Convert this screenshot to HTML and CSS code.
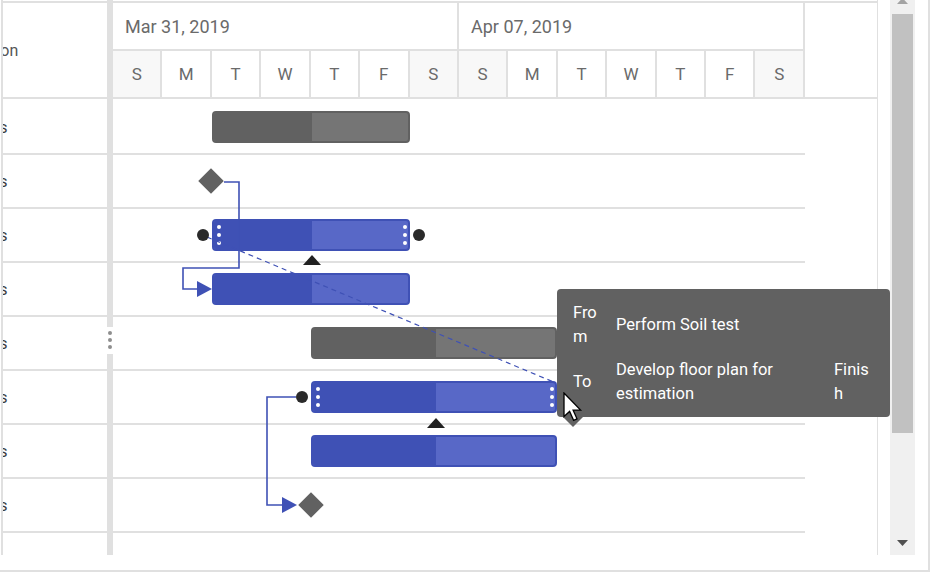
FILE: index.html
```html
<!DOCTYPE html>
<html>
<head>
<meta charset="utf-8">
<title>Gantt</title>
<link rel="stylesheet" href="styles.css">
</head>
<body>
<div class="gantt">
  <div class="main">
    <div class="grid-pane">
      <div class="grid-header"><span class="grid-text grid-title">Duration</span></div>
      <div class="grid-body">
        <div class="grid-row"><span class="grid-text">4 days</span></div>
        <div class="grid-row"><span class="grid-text">0 days</span></div>
        <div class="grid-row"><span class="grid-text">4 days</span></div>
        <div class="grid-row"><span class="grid-text">4 days</span></div>
        <div class="grid-row"><span class="grid-text">5 days</span></div>
        <div class="grid-row"><span class="grid-text">5 days</span></div>
        <div class="grid-row"><span class="grid-text">5 days</span></div>
        <div class="grid-row"><span class="grid-text">0 days</span></div>
        <div class="grid-row"></div>
      </div>
    </div>

    <div class="splitter">
      <div class="splitter-bar splitter-top"></div>
      <div class="splitter-grip"><i></i><i></i><i></i></div>
      <div class="splitter-bar splitter-bottom"></div>
    </div>

    <div class="chart-pane">
      <div class="chart-header">
        <div class="timeline">
          <div class="weeks">
            <div class="week">Mar 31, 2019</div>
            <div class="week">Apr 07, 2019</div>
          </div>
          <div class="days">
            <div class="day weekend">S</div>
            <div class="day">M</div>
            <div class="day">T</div>
            <div class="day">W</div>
            <div class="day">T</div>
            <div class="day">F</div>
            <div class="day weekend">S</div>
            <div class="day weekend">S</div>
            <div class="day">M</div>
            <div class="day">T</div>
            <div class="day">W</div>
            <div class="day">T</div>
            <div class="day">F</div>
            <div class="day weekend">S</div>
          </div>
        </div>
        <div class="header-filler"></div>
      </div>

      <div class="chart-body">
        <div class="row">
          <div class="bar bar-grey" style="margin-left:99px;width:198px"><div class="progress" style="width:98px"></div></div>
        </div>
        <div class="row">
          <div class="milestone" style="margin-left:89px"></div>
        </div>
        <div class="row">
          <div class="bar bar-blue" style="margin-left:99px;width:198px">
            <div class="progress" style="width:98px"></div>
            <div class="grip grip-left"><i></i><i></i><i></i></div>
            <div class="grip grip-right"><i></i><i></i><i></i></div>
          </div>
        </div>
        <div class="row">
          <div class="bar bar-blue" style="margin-left:99px;width:198px"><div class="progress" style="width:98px"></div></div>
        </div>
        <div class="row">
          <div class="bar bar-grey" style="margin-left:198px;width:246px"><div class="progress" style="width:123px"></div></div>
        </div>
        <div class="row">
          <div class="bar bar-blue" style="margin-left:198px;width:246px">
            <div class="progress" style="width:123px"></div>
            <div class="grip grip-left"><i></i><i></i><i></i></div>
            <div class="grip grip-right"><i></i><i></i><i></i></div>
          </div>
        </div>
        <div class="row">
          <div class="bar bar-blue" style="margin-left:198px;width:246px"><div class="progress" style="width:123px"></div></div>
        </div>
        <div class="row">
          <div class="milestone" style="margin-left:189px"></div>
        </div>
        <div class="row"></div>
      </div>

      <svg class="overlay" width="764" height="456" viewBox="113 99 764 456">
        <path class="connector" d="M224 182 H239 V268 H183 V289 H199"/>
        <polygon class="arrow" points="197,281 197,297 212,289"/>
        <path class="connector" d="M296 397 H267 V505 H284"/>
        <polygon class="arrow" points="282,497 282,513 297,505"/>
        <line class="dashed" x1="207" y1="237" x2="556" y2="383"/>
        <circle class="point" cx="203" cy="235" r="6"/>
        <circle class="point" cx="419" cy="235" r="6"/>
        <circle class="point" cx="302" cy="397" r="6"/>
        <polygon class="handle" points="303,265 321,265 312,255"/>
        <polygon class="handle" points="427,428 445,428 436,418"/>
        <polygon class="drag-mark" points="573,403 585,415 573,427 561,415"/>
      </svg>
    </div>

    <div class="vscroll">
      <div class="scroll-up"><svg width="25" height="14" viewBox="0 0 25 14"><polygon points="7,4 18,4 12.5,-2" class="arrow-up"/></svg></div>
      <div class="scroll-thumb"></div>
      <div class="scroll-space"></div>
      <div class="scroll-down"><svg width="25" height="20" viewBox="0 0 25 20"><polygon points="7,5 18,5 12.5,11" class="arrow-down"/></svg></div>
    </div>
  </div>

  <div class="tooltip">
    <div class="tt-label">From</div>
    <div class="tt-value">Perform Soil test</div>
    <div class="tt-extra"></div>
    <div class="tt-label">To</div>
    <div class="tt-value">Develop floor plan for estimation</div>
    <div class="tt-extra">Finish</div>
  </div>

  <svg class="cursor" width="20" height="30" viewBox="0 0 20 30">
    <path d="M1 1 L1 24.5 L6.6 19.4 L10.6 28.3 L14 26.8 L10.1 18.1 L17.6 18.1 Z"/>
  </svg>
</div>
</body>
</html>
```

FILE: styles.css
```css
* {
  box-sizing: border-box;
}

html,
body {
  margin: 0;
  background: #ffffff;
  font-family: Roboto, "Liberation Sans", Arial, sans-serif;
}

.gantt {
  position: relative;
  width: 930px;
  height: 572px;
  border-right: 2px solid #e0e0e0;
  border-bottom: 2px solid #e0e0e0;
}

.main {
  display: flex;
  height: 555px;
}

/* ---------- grid pane ---------- */
.grid-pane {
  flex: none;
  width: 106px;
  margin-left: 1px;
  border-left: 2px solid #e0e0e0;
  padding-top: 1px;
  overflow: hidden;
}

.grid-header {
  height: 98px;
  border-top: 2px solid #e0e0e0;
  border-bottom: 2px solid #e0e0e0;
  display: flex;
  align-items: center;
}

.grid-body {
  padding-top: 2px;
}

.grid-row {
  height: 54px;
  border-bottom: 2px solid #e0e0e0;
  display: flex;
  align-items: center;
}

.grid-text {
  margin-left: -42px;
  white-space: nowrap;
  font-size: 16px;
  color: #3c3c3c;
}

.grid-text.grid-title {
  margin-left: -45px;
  color: #555555;
}

/* ---------- splitter ---------- */
.splitter {
  flex: none;
  width: 6px;
  display: flex;
  flex-direction: column;
}

.splitter-bar {
  background: #e0e0e0;
}

.splitter-top {
  height: 327px;
}

.splitter-bottom {
  flex: 1;
}

.splitter-grip {
  height: 27px;
  display: flex;
  flex-direction: column;
  align-items: center;
  gap: 3px;
  padding-top: 4px;
}

.splitter-grip i {
  display: block;
  width: 4px;
  height: 4px;
  border-radius: 50%;
  background: #8e8e8e;
}

/* ---------- chart pane ---------- */
.chart-pane {
  position: relative;
  flex: none;
  width: 765px;
  padding-top: 1px;
  border-right: 1px solid #e0e0e0;
}

.chart-header {
  display: flex;
  height: 98px;
  border-top: 2px solid #e0e0e0;
  border-bottom: 2px solid #e0e0e0;
}

.timeline {
  width: 692px;
  display: flex;
  flex-direction: column;
}

.weeks {
  display: flex;
  height: 48px;
  border-bottom: 2px solid #e0e0e0;
}

.week {
  flex: 1;
  display: flex;
  align-items: center;
  padding-left: 12px;
  border-right: 2px solid #e0e0e0;
  font-size: 18px;
  color: #6a6a6a;
}

.days {
  display: flex;
  height: 46px;
}

.day {
  flex: 1;
  display: flex;
  align-items: center;
  justify-content: center;
  border-right: 2px solid #e0e0e0;
  font-size: 17px;
  color: #6a6a6a;
}

.day.weekend {
  background: #f8f8f8;
}

.header-filler {
  flex: 1;
}

.chart-body {
  height: 456px;
  padding-top: 2px;
  overflow: hidden;
}

.row {
  width: 692px;
  height: 54px;
  border-bottom: 2px solid #e0e0e0;
  display: flex;
  align-items: center;
}

.bar {
  position: relative;
  flex: none;
  height: 32px;
  border: 2px solid;
  border-radius: 4px;
  display: flex;
  overflow: hidden;
}

.bar-grey {
  border-color: #616161;
  background: #757575;
}

.bar-grey .progress {
  background: #616161;
}

.bar-blue {
  border-color: #3f51b5;
  background: #5868c7;
}

.bar-blue .progress {
  background: #3f51b5;
}

.progress {
  height: 100%;
}

.grip {
  position: absolute;
  top: 50%;
  transform: translateY(-50%);
  display: flex;
  flex-direction: column;
  gap: 4px;
}

.grip-left {
  left: 3px;
}

.grip-right {
  right: 1px;
}

.grip i {
  display: block;
  width: 4px;
  height: 4px;
  border-radius: 50%;
  background: #ffffff;
}

.milestone {
  flex: none;
  width: 18px;
  height: 18px;
  background: #616161;
  transform: rotate(45deg);
}

.overlay {
  position: absolute;
  left: 0;
  top: 99px;
}

.connector {
  fill: none;
  stroke: #3f51b5;
  stroke-width: 1.6;
}

.arrow {
  fill: #3f51b5;
}

.dashed {
  stroke: #3f51b5;
  stroke-width: 1.2;
  stroke-dasharray: 5 4;
}

.point {
  fill: #2a2a2a;
}

.handle {
  fill: #212121;
}

.drag-mark {
  fill: #616161;
}

/* ---------- scrollbar ---------- */
.vscroll {
  flex: none;
  width: 25px;
  margin-left: 12px;
  background: #f0f0f0;
  display: flex;
  flex-direction: column;
}

.scroll-up {
  height: 14px;
  overflow: hidden;
}

.scroll-up svg,
.scroll-down svg {
  display: block;
}

.arrow-up {
  fill: #a3a3a3;
}

.arrow-down {
  fill: #505050;
}

.scroll-thumb {
  height: 419px;
  width: 21px;
  margin-left: 2px;
  background: #c1c1c1;
}

.scroll-space {
  flex: 1;
}

.scroll-down {
  height: 20px;
}

/* ---------- tooltip ---------- */
.tooltip {
  position: absolute;
  left: 557px;
  top: 289px;
  width: 333px;
  height: 128px;
  padding: 12px 21px 11px 16px;
  background: #616161;
  border-radius: 4px;
  color: #ffffff;
  font-size: 16.5px;
  line-height: 24px;
  display: grid;
  grid-template-columns: 43px 218px 37px;
  row-gap: 9px;
  align-items: center;
}

.tt-label {
  padding-right: 12px;
  overflow-wrap: anywhere;
}

.tt-value {
  padding-right: 24px;
}

.tt-extra {
  overflow-wrap: anywhere;
}

.cursor {
  position: absolute;
  left: 563px;
  top: 392px;
}

.cursor path {
  fill: #ffffff;
  stroke: #000000;
  stroke-width: 1.3;
  stroke-linejoin: miter;
}
```
